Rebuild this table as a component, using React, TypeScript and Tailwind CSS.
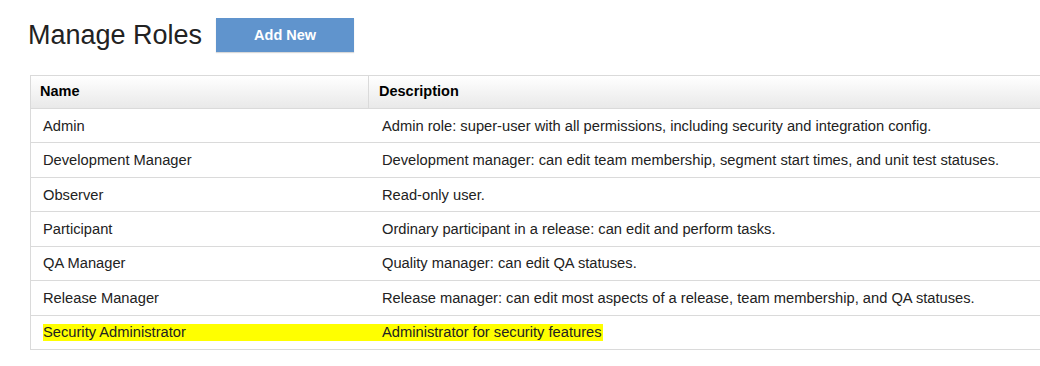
import React from "react";

type Role = { name: string; description: string; highlight?: boolean };

const roles: Role[] = [
  { name: "Admin", description: "Admin role: super-user with all permissions, including security and integration config." },
  { name: "Development Manager", description: "Development manager: can edit team membership, segment start times, and unit test statuses." },
  { name: "Observer", description: "Read-only user." },
  { name: "Participant", description: "Ordinary participant in a release: can edit and perform tasks." },
  { name: "QA Manager", description: "Quality manager: can edit QA statuses." },
  { name: "Release Manager", description: "Release manager: can edit most aspects of a release, team membership, and QA statuses." },
  { name: "Security Administrator", description: "Administrator for security features", highlight: true },
];

const App = (): React.ReactNode => {
  return (
    <div
      className="w-[1040px] h-[366px] overflow-hidden bg-white text-[#222]"
      style={{ fontFamily: '"Liberation Sans", Arial, sans-serif' }}
    >
      <div className="flex items-start pt-[18px] pl-[28px]">
        <h1 className="mt-[2px] text-[27px] leading-[30px] font-normal">Manage Roles</h1>
        <button className="ml-[14px] w-[138px] h-[34px] pt-[1px] bg-[#6094cd] text-white font-bold text-[14.5px] shadow-[0_1px_1px_rgba(0,0,0,0.15)]">
          Add New
        </button>
      </div>

      <div className="mt-[23px] ml-[30px] w-[1030px] border-l border-[#dadada]">
        <div className="flex h-[34px] border-t border-b border-[#dadada] bg-linear-to-b from-white to-[#e9e9e9] font-bold text-[14.5px] text-black">
          <div className="w-[338px] pl-[9px] flex items-center border-r border-[#dadada]">Name</div>
          <div className="flex-1 pl-[10px] flex items-center">Description</div>
        </div>
        {roles.map((role, id) => {
          return (
            <div key={id} className="flex h-[34.43px] border-b border-[#dadada] text-[14.7px]">
              <div className="w-[338px] pl-[12px] flex items-center">
                {role.highlight ? (
                  <div className="w-full h-[17px] leading-[17px] bg-[#ffff00]">{role.name}</div>
                ) : (
                  <span>{role.name}</span>
                )}
              </div>
              <div className="flex-1 flex items-center">
                {role.highlight ? (
                  <span className="h-[17px] leading-[17px] pl-[13px] pr-[1px] bg-[#ffff00]">{role.description}</span>
                ) : (
                  <span className="pl-[13px]">{role.description}</span>
                )}
              </div>
            </div>
          );
        })}
      </div>
    </div>
  );
};

export default App;
